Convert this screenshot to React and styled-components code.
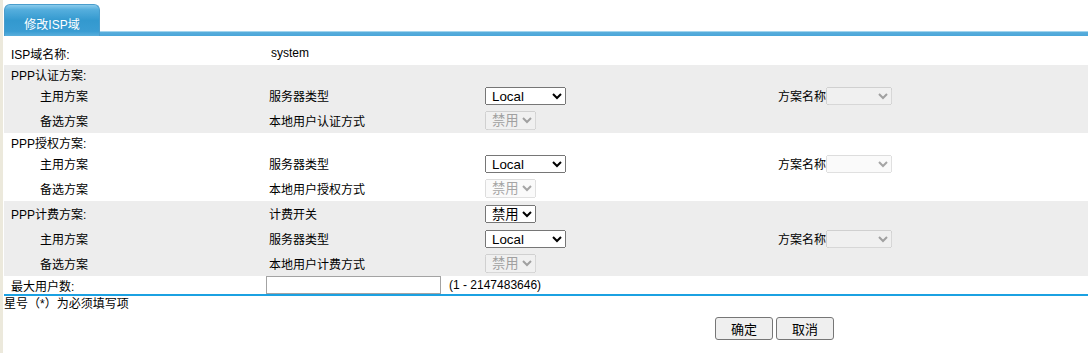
import React from 'react';
import styled, { createGlobalStyle } from 'styled-components';

const GlobalStyle = createGlobalStyle`
  body {
    margin: 0;
    background: #fff;
    font-family: "Liberation Sans", "Noto Sans CJK SC", sans-serif;
    font-size: 12px;
    color: #000;
  }
`;

const Page = styled.div`
  border-left: 3px solid #ece9dc;
  padding-left: 1px;
  min-height: 353px;
  box-sizing: border-box;
`;

const TabBar = styled.div`
  display: flex;
  align-items: flex-end;
  padding-top: 4px;
`;

const Tab = styled.div`
  width: 96px;
  height: 32px;
  box-sizing: border-box;
  display: flex;
  align-items: center;
  justify-content: center;
  padding-top: 6px;
  color: #fff;
  font-size: 12px;
  border: 1px solid #4a9dcc;
  border-bottom: 0;
  border-radius: 6px 6px 0 0;
  background: linear-gradient(#8acbec 0%, #55aedd 15%, #3399cf 50%, #3a9dd3 85%, #5aafdc 100%);
`;

const TabLine = styled.div`
  flex: 1;
  height: 5px;
  background: linear-gradient(#a2d4ee 0%, #a2d4ee 20%, #5aaedc 21%, #4aa6d9 100%);
`;

const Block = styled.div`
  background: ${(p) => (p.$shade ? '#ededed' : '#fff')};
`;

const Row = styled.div`
  display: grid;
  grid-template-columns: 262px 217px 292px 1fr;
  align-items: center;
  height: ${(p) => p.$h}px;
  box-sizing: border-box;
  padding-top: ${(p) => p.$top || 0}px;
`;

const Label = styled.div`
  padding-left: ${(p) => (p.$indent ? 36 : 7)}px;
  white-space: nowrap;
`;

const Cell = styled.div`
  padding-left: ${(p) => p.$pad ?? 3}px;
  white-space: nowrap;
  display: flex;
  align-items: center;
`;

const Select = styled.select`
  width: ${(p) => p.$w}px;
  height: ${(p) => p.$h || 18}px;
  margin-left: ${(p) => p.$ml ?? 2}px;
  padding: 0 0 0 2px;
  font: 13.33px "Liberation Sans", "Noto Sans CJK SC", sans-serif;
  box-sizing: border-box;
`;

const MaxRow = styled.div`
  display: grid;
  grid-template-columns: 262px 1fr;
  align-items: center;
  height: 18px;
  border-bottom: 2px solid #1ba1e2;
`;

const TextInput = styled.input`
  width: 175px;
  height: 18px;
  box-sizing: border-box;
  border: 1px solid #a3a3a3;
  padding: 0 2px;
  margin: 0 8px 0 0;
  font: 12px "Liberation Sans", sans-serif;
`;

const Note = styled.div`
  height: 14px;
  line-height: 14px;
  margin-top: 1px;
`;

const ButtonBar = styled.div`
  display: flex;
  gap: 3px;
  padding: 6px 0 0 711px;
`;

const Button = styled.button`
  width: 58px;
  height: 23px;
  padding: 0;
  background: #efefef;
  border: 1px solid #767676;
  border-radius: 3px;
  font: 13px "Liberation Sans", "Noto Sans CJK SC", sans-serif;
  color: #000;
`;

const SchemeBlock = ({ shade, title, backupLabel, switchRow }) => (
  <Block $shade={shade}>
    {switchRow ? (
      <Row $h={25}>
        <Label>{title}</Label>
        <Cell>计费开关</Cell>
        <Cell $pad={0}>
          <Select $w={51} $h={18} defaultValue="禁用">
            <option>禁用</option>
            <option>启用</option>
          </Select>
        </Cell>
      </Row>
    ) : (
      <Row $h={18}>
        <Label>{title}</Label>
      </Row>
    )}
    <Row $h={25}>
      <Label $indent>主用方案</Label>
      <Cell>服务器类型</Cell>
      <Cell $pad={0}>
        <Select $w={81} defaultValue="Local">
          <option>Local</option>
          <option>Radius</option>
        </Select>
      </Cell>
      <Cell>
        方案名称
        <Select $w={66} $ml={0} disabled>
          <option></option>
        </Select>
      </Cell>
    </Row>
    <Row $h={25}>
      <Label $indent>备选方案</Label>
      <Cell>{backupLabel}</Cell>
      <Cell $pad={0}>
        <Select $w={51} $h={19} disabled defaultValue="禁用">
          <option>禁用</option>
        </Select>
      </Cell>
    </Row>
  </Block>
);

const App = () => {
  return (
    <>
      <GlobalStyle />
      <Page>
        <TabBar>
          <Tab>修改ISP域</Tab>
          <TabLine />
        </TabBar>
        <Row $h={29} $top={5}>
          <Label>ISP域名称:</Label>
          <Cell $pad={5}>system</Cell>
        </Row>
        <SchemeBlock shade title="PPP认证方案:" backupLabel="本地用户认证方式" />
        <SchemeBlock title="PPP授权方案:" backupLabel="本地用户授权方式" />
        <SchemeBlock shade switchRow title="PPP计费方案:" backupLabel="本地用户计费方式" />
        <MaxRow>
          <Label>最大用户数:</Label>
          <Cell $pad={0}>
            <TextInput type="text" />
            (1 - 2147483646)
          </Cell>
        </MaxRow>
        <Note>星号（*）为必须填写项</Note>
        <ButtonBar>
          <Button>确定</Button>
          <Button>取消</Button>
        </ButtonBar>
      </Page>
    </>
  );
};

export default App;
